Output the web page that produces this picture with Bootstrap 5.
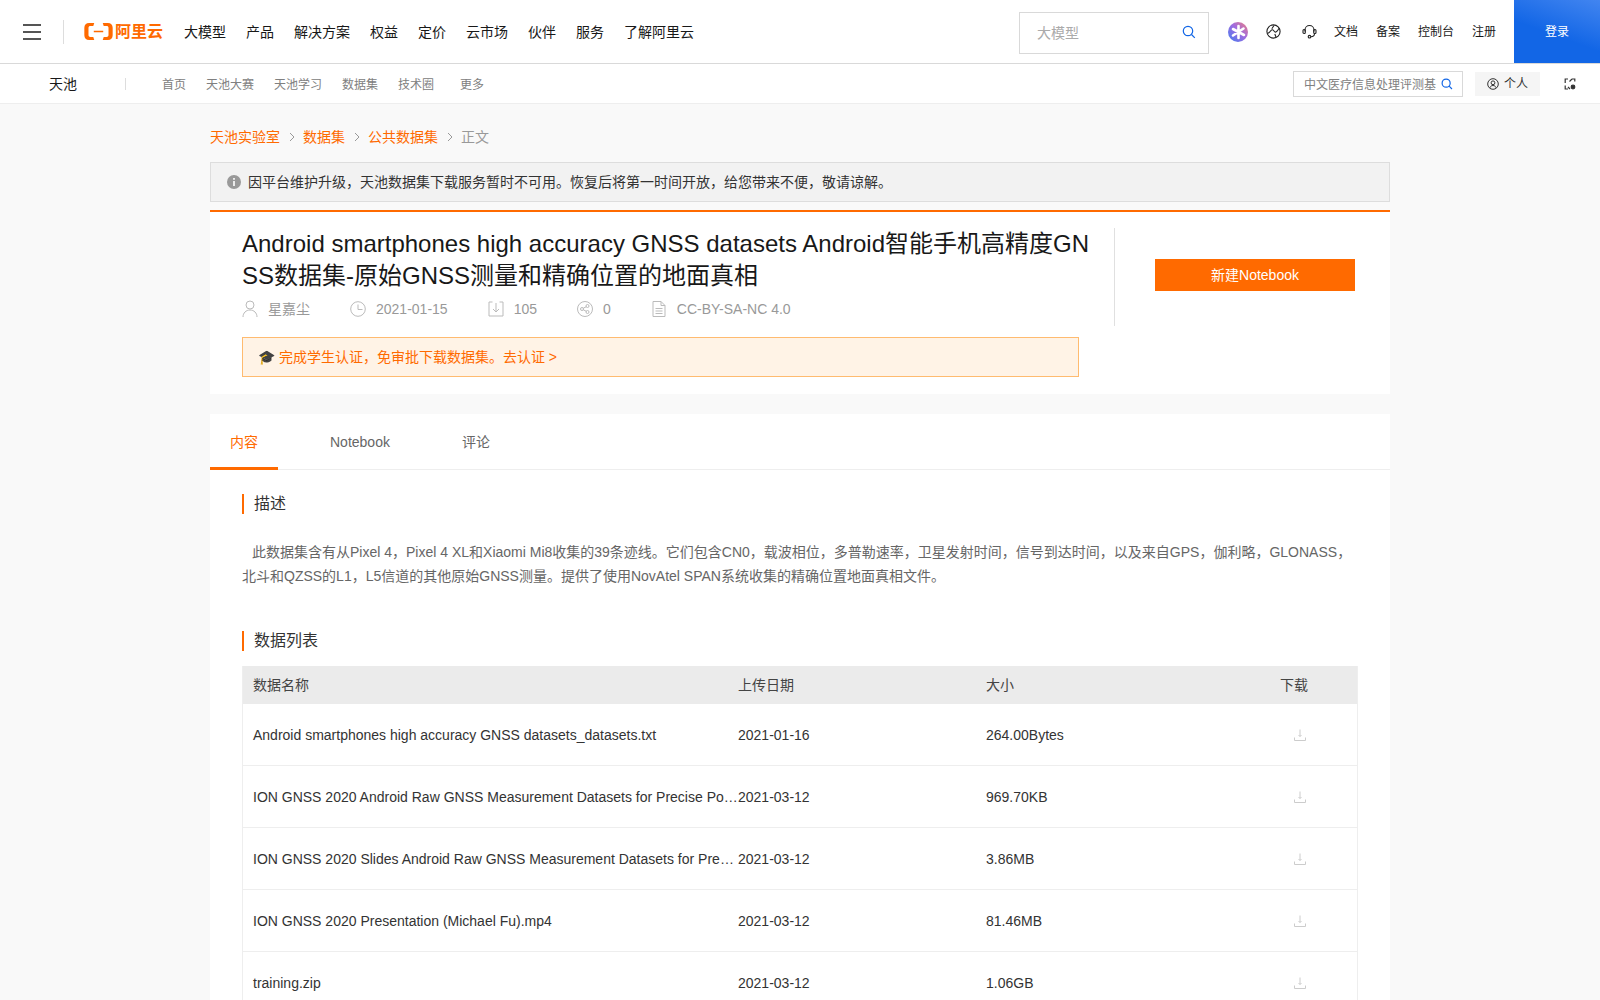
<!DOCTYPE html>
<html lang="zh">
<head>
<meta charset="utf-8">
<title>Android smartphones high accuracy GNSS datasets</title>
<link href="https://cdn.jsdelivr.net/npm/bootstrap@5.3.0/dist/css/bootstrap.min.css" rel="stylesheet">
<style>
html,body{height:1000px;overflow:hidden}
body{font-family:"Liberation Sans","Noto Sans CJK SC",sans-serif;font-size:14px;background:#f9f9f9;color:#333}
a{text-decoration:none;color:inherit}
svg{display:block;flex:none}
.topbar{height:64px;background:#fff;border-bottom:1px solid #d9d9d9;padding-left:23px}
.burger{width:18px;height:16px;display:flex;flex-direction:column;justify-content:space-between;margin-right:22px}
.burger i{display:block;height:2px;background:#555}
.vbar{width:1px;height:24px;background:#ddd}
.brand{margin:0 20px;color:#ff6a00;font-weight:700;font-size:16px;line-height:24px;gap:2px;width:80px;white-space:nowrap}
.mainnav{gap:20px;color:#181818;padding-top:2px}
.topsearch{width:190px;height:42px;border:1px solid #d9d9d9;padding:2px 12px 0 17px;color:#aaa;margin:2px 11px 0 0}
.topsearch svg{margin-bottom:4px}
.tools{font-size:12px;color:#181818}
.tool-ic{width:36px;display:flex;justify-content:center}
.tool-tx{margin-left:18px;padding-top:1px}
.tool-tx:first-of-type{margin-left:6px}
.loginbtn{width:86px;height:63px;margin-left:18px;background:linear-gradient(200deg,#4285f0 0%,#1266e6 55%);color:#fff;font-size:12px}
.subbar{height:40px;background:#fff;border-bottom:1px solid #eee;padding-left:49px}
.subname{width:76px;font-size:14px;color:#181818;padding-top:1px}
.subdiv{width:1px;height:12px;background:#ddd;margin-right:36px}
.sublinks{gap:20px;font-size:12px;color:#808080;padding-top:3px}
.sublinks a:last-child{margin-left:6px}
.subsearch{width:170px;height:26px;border:1px solid #d9d9d9;padding:2px 0 0 10px;font-size:12px;color:#808080;white-space:nowrap;overflow:hidden;gap:5px}
.subsearch svg{margin-bottom:2px}
.subperson{width:65px;height:24px;margin:0 24px 0 12px;background:#f5f5f5;font-size:12px;color:#333;gap:5px;padding-top:1px}
.subperson svg{margin-bottom:1px}
.subscan{margin-right:24px}
.page{width:1180px;margin:0 auto}
.crumbs{height:24px;margin:21px 0 13px;gap:8.500px;color:#ff6a00;line-height:24px}
.crumbs span{color:#999}
.notice{height:40px;border:1px solid #ddd;background:#f2f2f2;padding-left:16px;gap:7px;margin-bottom:8px}
.headcard{background:#fff;border-top:2px solid #ff6a00;height:184px;padding:16px 0 0 32px;margin-bottom:20px}
.headleft{flex:none;width:872px;padding-right:18px}
.dtitle{font-size:24px;line-height:32px;font-weight:400;margin:0;color:#181818;word-break:break-all}
.metarow{margin-top:6px;height:22px;color:#999;gap:40px}
.metarow>div{gap:10px;display:flex;align-items:center}
.certbar{width:837px;height:40px;margin-top:17px;border:1px solid #ffbb70;background:#fff3e6;padding-left:15px;color:#ff6a00}
.headright{flex:none;width:276px;height:98px;padding:31px 0 0 40px;border-left:1px solid #e0e0e0;align-self:flex-start}
.newbtn{width:200px;height:32px;background:#ff6a00;color:#fff;border:0;border-radius:0;font-size:14px;padding:0}
.bodycard{background:#fff;min-height:600px}
.tabrow{height:56px;border-bottom:1px solid #eee;color:#666}
.tabitem{height:56px;padding:0 20px;line-height:56px}
.tabitem.on{color:#ff6a00;border-bottom:3px solid #ff6a00;width:68px;margin-right:32px}
.tabitem.nb{margin-right:32px}
.bodyin{padding:24px 32px 0}
.sect{font-size:16px;line-height:20px;border-left:2px solid #ff6a00;padding-left:10px;color:#333;font-weight:400;margin:0}
.desc{margin:26px 0 43px;line-height:24px;color:#666;text-indent:10px}
.dtable{width:1116px;margin:15px 0 0;table-layout:fixed;border-left:1px solid #eee;border-right:1px solid #eee;border-collapse:separate;border-spacing:0;--bs-table-bg:transparent;color:#333}
.dtable th{height:38px;padding:1px 0 0 10px;background:#ebebeb;font-weight:400;color:#444;border:0;vertical-align:middle}
.dtable td{height:62px;padding:1px 0 0 10px;border-bottom:1px solid #eee;vertical-align:middle;white-space:nowrap;overflow:hidden;text-overflow:ellipsis}
.dtable .datec,.dtable .sizec,.dtable .dlc{padding-left:0}
.dlhead{padding-left:47px}
.dlic{margin-left:61px}
</style>
</head>
<body>
<header class="topbar d-flex align-items-center">
  <div class="burger"><i></i><i></i><i></i></div>
  <div class="vbar"></div>
  <a class="brand d-flex align-items-center" href="#">
    <svg width="29" height="17" viewBox="0 0 30 18"><path d="M10.500 0H5C2 0 0 2 0 5v8c0 3 2 5 5 5h5.500l-1-3.200H6.500c-1.300 0-2.100-.7-2.100-2V5.200c0-1.300.8-2 2.100-2h3zM19.500 0H25c3 0 5 2 5 5v8c0 3-2 5-5 5h-5.500l1-3.200h3c1.300 0 2.100-.7 2.100-2V5.200c0-1.300-.8-2-2.100-2h-3z" fill="#ff6a00"/><rect x="10" y="8.200" width="10" height="1.600" fill="#ff6a00"/></svg>
    <span>阿里云</span>
  </a>
  <nav class="mainnav d-flex"><a href="#">大模型</a><a href="#">产品</a><a href="#">解决方案</a><a href="#">权益</a><a href="#">定价</a><a href="#">云市场</a><a href="#">伙伴</a><a href="#">服务</a><a href="#">了解阿里云</a></nav>
  <div class="ms-auto d-flex align-items-center">
    <div class="topsearch d-flex align-items-center justify-content-between"><span>大模型</span>
      <svg width="14" height="14" viewBox="0 0 14 14" fill="none" stroke="#1266e6" stroke-width="1.200"><circle cx="6" cy="6" r="4.700"/><path d="M9.500 9.500l3.300 3.300"/></svg></div>
    <div class="tools d-flex align-items-center">
      <div class="tool-ic"><svg width="20" height="20" viewBox="0 0 20 20"><defs><linearGradient id="gr" x1="1" y1="0" x2="0" y2="1"><stop offset="0" stop-color="#ee7f80"/><stop offset=".45" stop-color="#a06ce0"/><stop offset="1" stop-color="#3f7cf0"/></linearGradient></defs><circle cx="10" cy="10" r="10" fill="url(#gr)"/><path d="M10.500 4v12M5 7l11 6M15.500 6.500L5 13.500" stroke="#fff" stroke-width="2.600" stroke-linecap="round"/></svg></div>
      <div class="tool-ic"><svg width="15" height="15" viewBox="0 0 15 15" fill="none" stroke="#222" stroke-width="1.100"><circle cx="7.500" cy="7.500" r="6.600"/><path d="M1.500 9.500C3 9 4 8 5 6.500c1-1.200 2-1 3 .5s2 1.500 3 .2c.8-1 1.500-2 2.500-3.200M8 1.500L5.800 4.800M10 13l-1.200-3"/></svg></div>
      <div class="tool-ic"><svg width="15" height="15" viewBox="0 0 15 15" fill="none" stroke="#222" stroke-width="1.100"><path d="M3 7.500V6a4.500 4.500 0 0 1 9 0v1.500"/><rect x="1" y="5.500" width="2.300" height="4" rx="1"/><rect x="11.700" y="5.500" width="2.300" height="4" rx="1"/><path d="M12.500 9.500c0 2-1.500 3.200-3.500 3.200"/><circle cx="7.500" cy="12.700" r="1.300"/></svg></div>
      <a class="tool-tx" href="#">文档</a><a class="tool-tx" href="#">备案</a><a class="tool-tx" href="#">控制台</a><a class="tool-tx" href="#">注册</a>
      <a class="loginbtn d-flex align-items-center justify-content-center" href="#">登录</a>
    </div>
  </div>
</header>
<div class="subbar d-flex align-items-center">
  <div class="subname">天池</div>
  <div class="subdiv"></div>
  <nav class="sublinks d-flex"><a href="#">首页</a><a href="#">天池大赛</a><a href="#">天池学习</a><a href="#">数据集</a><a href="#">技术圈</a><a href="#">更多</a></nav>
  <div class="ms-auto d-flex align-items-center">
    <div class="subsearch d-flex align-items-center"><span>中文医疗信息处理评测基</span>
      <svg width="12" height="12" viewBox="0 0 14 14" fill="none" stroke="#1266e6" stroke-width="1.400"><circle cx="6" cy="6" r="4.700"/><path d="M9.500 9.500l3.300 3.300"/></svg></div>
    <div class="subperson d-flex align-items-center justify-content-center">
      <svg width="12" height="12" viewBox="0 0 12 12" fill="none" stroke="#333"><circle cx="6" cy="6" r="5.300"/><circle cx="6" cy="4.800" r="1.900"/><path d="M2.800 9.800c.6-1.500 1.800-2.300 3.200-2.300s2.600.8 3.200 2.300"/></svg>个人</div>
    <svg class="subscan" width="12" height="12" viewBox="0 0 12 12" fill="none" stroke="#333" stroke-width="1.200"><path d="M4 1H1.200v4M1.200 7.500V11H4M8 1h2.800v2.500M10.800 6"/><path d="M5.500 3.500L8 1M4 9l2 2"/><circle cx="9" cy="9" r="1.800" fill="#333"/></svg>
  </div>
</div>
<main class="page">
  <div class="crumbs d-flex align-items-center">
    <a href="#">天池实验室</a><svg width="6" height="10" viewBox="0 0 6 10" fill="none" stroke="#999"><path d="M1 1l4 4-4 4"/></svg>
    <a href="#">数据集</a><svg width="6" height="10" viewBox="0 0 6 10" fill="none" stroke="#999"><path d="M1 1l4 4-4 4"/></svg>
    <a href="#">公共数据集</a><svg width="6" height="10" viewBox="0 0 6 10" fill="none" stroke="#999"><path d="M1 1l4 4-4 4"/></svg>
    <span>正文</span>
  </div>
  <div class="notice d-flex align-items-center">
    <svg width="14" height="14" viewBox="0 0 14 14"><circle cx="7" cy="7" r="7" fill="#999"/><rect x="6.200" y="6" width="1.600" height="5" fill="#fff"/><rect x="6.200" y="3" width="1.600" height="1.800" fill="#fff"/></svg>
    <span>因平台维护升级，天池数据集下载服务暂时不可用。恢复后将第一时间开放，给您带来不便，敬请谅解。</span>
  </div>
  <section class="headcard d-flex">
    <div class="headleft">
      <h1 class="dtitle">Android smartphones high accuracy GNSS datasets Android智能手机高精度GNSS数据集-原始GNSS测量和精确位置的地面真相</h1>
      <div class="metarow d-flex align-items-center">
        <div><svg width="16" height="18" viewBox="0 0 16 18" fill="none" stroke="#bbb"><circle cx="8" cy="5" r="4"/><path d="M1 17c0-4 3-7 7-7s7 3 7 7"/></svg>星嘉尘</div>
        <div><svg width="16" height="16" viewBox="0 0 16 16" fill="none" stroke="#bbb"><circle cx="8" cy="8" r="7.300"/><path d="M8 3.500v5h4.500"/></svg>2021-01-15</div>
        <div><svg width="16" height="16" viewBox="0 0 16 16" fill="none" stroke="#bbb"><path d="M4.500 1H1v14h14V1h-3.500M8 2v9M5 8l3 3 3-3"/></svg>105</div>
        <div><svg width="16" height="16" viewBox="0 0 16 16" fill="none" stroke="#bbb"><circle cx="8" cy="8" r="7.500"/><circle cx="5" cy="8" r="1.500"/><circle cx="10.500" cy="5" r="1.500"/><circle cx="10.500" cy="11" r="1.500"/><path d="M6.300 7.200l3-1.500M6.300 8.800l3 1.500"/></svg>0</div>
        <div><svg width="16" height="16" viewBox="0 0 16 16" fill="none" stroke="#bbb"><path d="M2 .5h8l4 4v11H2zM10 .5v4h4M4.500 7.500h7M4.500 10h7M4.500 12.500h7"/></svg>CC-BY-SA-NC 4.0</div>
      </div>
      <div class="certbar d-flex align-items-center">🎓&nbsp;完成学生认证，免审批下载数据集。去认证 &gt;</div>
    </div>
    <div class="headright d-flex"><button class="btn newbtn" type="button">新建Notebook</button></div>
  </section>
  <section class="bodycard">
    <div class="tabrow d-flex">
      <a class="tabitem on" href="#">内容</a><a class="tabitem nb" href="#">Notebook</a><a class="tabitem" href="#">评论</a>
    </div>
    <div class="bodyin">
      <h2 class="sect">描述</h2>
      <p class="desc">此数据集含有从Pixel 4，Pixel 4 XL和Xiaomi Mi8收集的39条迹线。它们包含CN0，载波相位，多普勒速率，卫星发射时间，信号到达时间，以及来自GPS，伽利略，GLONASS，北斗和QZSS的L1，L5信道的其他原始GNSS测量。提供了使用NovAtel SPAN系统收集的精确位置地面真相文件。</p>
      <h2 class="sect">数据列表</h2>
      <table class="table dtable">
        <colgroup><col style="width:495px"><col style="width:248px"><col style="width:247px"><col></colgroup>
        <thead><tr><th>数据名称</th><th class="datec">上传日期</th><th class="sizec">大小</th><th class="dlc"><span class="d-block dlhead">下载</span></th></tr></thead>
        <tbody>
          <tr><td>Android smartphones high accuracy GNSS datasets_datasets.txt</td><td class="datec">2021-01-16</td><td class="sizec">264.00Bytes</td><td class="dlc"><svg class="dlic" width="12" height="12" viewBox="0 0 12 12" fill="none" stroke="#ccc"><path d="M6 .5v7M4.500 6L6 7.500 7.500 6M.5 8.500v3h11v-3"/></svg></td></tr>
          <tr><td>ION GNSS 2020 Android Raw GNSS Measurement Datasets for Precise Positioning</td><td class="datec">2021-03-12</td><td class="sizec">969.70KB</td><td class="dlc"><svg class="dlic" width="12" height="12" viewBox="0 0 12 12" fill="none" stroke="#ccc"><path d="M6 .5v7M4.500 6L6 7.500 7.500 6M.5 8.500v3h11v-3"/></svg></td></tr>
          <tr><td>ION GNSS 2020 Slides Android Raw GNSS Measurement Datasets for Precise Positioning</td><td class="datec">2021-03-12</td><td class="sizec">3.86MB</td><td class="dlc"><svg class="dlic" width="12" height="12" viewBox="0 0 12 12" fill="none" stroke="#ccc"><path d="M6 .5v7M4.500 6L6 7.500 7.500 6M.5 8.500v3h11v-3"/></svg></td></tr>
          <tr><td>ION GNSS 2020 Presentation (Michael Fu).mp4</td><td class="datec">2021-03-12</td><td class="sizec">81.46MB</td><td class="dlc"><svg class="dlic" width="12" height="12" viewBox="0 0 12 12" fill="none" stroke="#ccc"><path d="M6 .5v7M4.500 6L6 7.500 7.500 6M.5 8.500v3h11v-3"/></svg></td></tr>
          <tr><td>training.zip</td><td class="datec">2021-03-12</td><td class="sizec">1.06GB</td><td class="dlc"><svg class="dlic" width="12" height="12" viewBox="0 0 12 12" fill="none" stroke="#ccc"><path d="M6 .5v7M4.500 6L6 7.500 7.500 6M.5 8.500v3h11v-3"/></svg></td></tr>
        </tbody>
      </table>
    </div>
  </section>
</main>
<script src="https://cdn.jsdelivr.net/npm/bootstrap@5.3.0/dist/js/bootstrap.bundle.min.js"></script>
</body>
</html>
